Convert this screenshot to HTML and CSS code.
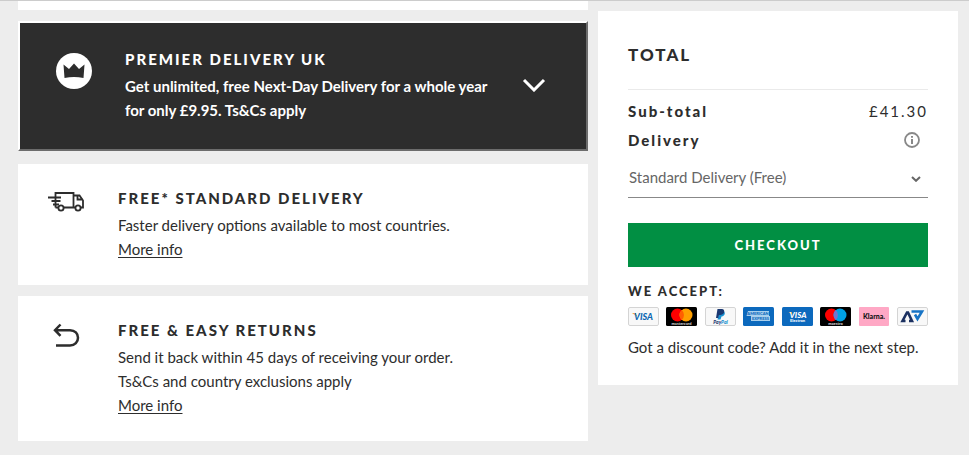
FILE: index.html
```html
<!DOCTYPE html>
<html lang="en">
<head>
    <meta charset="UTF-8">
    <meta name="viewport" content="width=device-width, initial-scale=1.0">
    <title>My Bag</title>
    <link rel="stylesheet" href="styles.css">
</head>
<body>

    <div class="container">
        <main class="bag">
            <div class="bag-end"></div>

            <button type="button" class="premier">
                <svg class="premier-icon" viewBox="0 0 36 36" aria-hidden="true">
                    <circle cx="18" cy="18" r="18" fill="#fff"/>
                    <path d="M7.500 11.500l5.500 4.500L18 10.500l5 5.500 5.500-4.500-1 13.500q-9.500-2-19 0z" fill="#2d2d2d"/>
                </svg>
                <span class="premier-text">
                    <span class="heading">PREMIER DELIVERY UK</span>
                    <span class="copy">Get unlimited, free Next-Day Delivery for a whole year for only £9.95. Ts&amp;Cs apply</span>
                </span>
                <svg class="premier-arrow" viewBox="0 0 24 14" aria-hidden="true">
                    <path d="M2 2l10 10L22 2" fill="none" stroke="#fff" stroke-width="3"/>
                </svg>
            </button>

            <section class="card">
                <svg class="card-icon" viewBox="0 0 36 28" fill="none" stroke="#2d2d2d" stroke-width="1.800" aria-hidden="true">
                    <path d="M7.500 20.500V6h18v14.500H16M26 8.500h5.500l3.500 5v7h-2M29.500 9v3.500H35M7.500 20.500H10M23 20.500h4"/>
                    <path d="M0 10.500h13M3.500 14h9M5 17.500h6"/>
                    <circle cx="13" cy="21" r="2.600"/>
                    <circle cx="30" cy="21" r="2.600"/>
                </svg>
                <div>
                    <h2 class="heading">FREE* STANDARD DELIVERY</h2>
                    <p class="copy">Faster delivery options available to most countries.</p>
                    <a href="#" class="more">More info</a>
                </div>
            </section>

            <section class="card">
                <svg class="card-icon" viewBox="0 0 36 28" fill="none" stroke="#2d2d2d" stroke-width="2.500" aria-hidden="true">
                    <path d="M8 26.500h14c5 0 8-3.500 8-7.700s-3-7.600-8-7.600H7M12.500 5.500L7 11.200l5.500 5.700"/>
                </svg>
                <div>
                    <h2 class="heading">FREE &amp; EASY RETURNS</h2>
                    <p class="copy">Send it back within 45 days of receiving your order.</p>
                    <p class="copy">Ts&amp;Cs and country exclusions apply</p>
                    <a href="#" class="more">More info</a>
                </div>
            </section>
        </main>

        <aside class="total">
            <h2 class="total-title">TOTAL</h2>

            <div class="row">
                <span class="label">Sub-total</span>
                <span class="price">£41.30</span>
            </div>
            <div class="row">
                <label class="label" for="delivery">Delivery</label>
                <button type="button" class="info" aria-label="Delivery information">
                    <svg viewBox="0 0 16 16" width="16" height="16" fill="none" stroke="#888" stroke-width="1.800" aria-hidden="true">
                        <circle cx="8" cy="8" r="7"/>
                        <path d="M8 7v5M8 4v1.800" stroke-width="2"/>
                    </svg>
                </button>
            </div>

            <div class="select-box">
                <select id="delivery" name="delivery">
                    <option>Standard Delivery (Free)</option>
                </select>
                <svg class="select-arrow" viewBox="0 0 10 6" aria-hidden="true">
                    <path d="M1 1l4 3.800L9 1" fill="none" stroke="#666" stroke-width="2"/>
                </svg>
            </div>

            <button type="button" class="checkout">CHECKOUT</button>

            <h3 class="accept">WE ACCEPT:</h3>
            <ul class="payments">
                <li>
                    <svg viewBox="0 0 31 19" role="img" aria-label="Visa">
                        <rect class="plain" x=".5" y=".5" width="30" height="18" rx="1.500"/>
                        <path d="M4 6h3.500l1.500 3.500z" fill="#f7a823"/>
                        <text class="visa" x="15.500" y="12.800" fill="#0b67b2">VISA</text>
                    </svg>
                </li>
                <li>
                    <svg viewBox="0 0 31 19" role="img" aria-label="Mastercard">
                        <rect width="31" height="19" rx="1.500" fill="#000"/>
                        <circle cx="11.500" cy="8" r="6.500" fill="#f00"/>
                        <circle cx="20" cy="8" r="6.500" fill="#ff9f00"/>
                        <path d="M15.750 3.100a6.500 6.500 0 0 1 0 9.800 6.500 6.500 0 0 1 0-9.800z" fill="#ff5f00"/>
                        <text class="tiny" x="15.500" y="17.500" fill="#ccc">mastercard</text>
                    </svg>
                </li>
                <li>
                    <svg viewBox="0 0 31 19" role="img" aria-label="PayPal">
                        <rect class="plain" x=".5" y=".5" width="30" height="18" rx="1.500"/>
                        <path d="M14.500 4h4c2 1 2 5-2 5.500l-1 3h-3z" fill="#1790d0"/>
                        <path d="M12.500 2h4.500c3 0 3.500 5.500-1.500 6h-1.500l-.8 3H11z" fill="#1b3871"/>
                        <text class="paypal" x="15.500" y="16.500" fill="#1b3871">Pay<tspan fill="#1790d0">Pal</tspan></text>
                    </svg>
                </li>
                <li>
                    <svg viewBox="0 0 31 19" role="img" aria-label="American Express">
                        <rect width="31" height="19" rx="1.500" fill="#0c69bd"/>
                        <path d="M5 4h21v5H3.500zM8 9h19v5H8z" fill="#a9d0ed"/>
                        <text class="tiny" x="15" y="8.200" fill="#0c69bd">AMERICAN</text>
                        <text class="tiny" x="17.500" y="13.200" fill="#0c69bd">EXPRESS</text>
                    </svg>
                </li>
                <li>
                    <svg viewBox="0 0 31 19" role="img" aria-label="Visa Electron">
                        <rect width="31" height="19" rx="1.500" fill="#0c69bd"/>
                        <path d="M6.500 5h3l1 2.500z" fill="#f7a823"/>
                        <text class="visa-small" x="16" y="10.500" fill="#fff">VISA</text>
                        <text class="tiny" x="15.500" y="14.800" fill="#fff">Electron</text>
                    </svg>
                </li>
                <li>
                    <svg viewBox="0 0 31 19" role="img" aria-label="Maestro">
                        <rect width="31" height="19" rx="1.500" fill="#000"/>
                        <circle cx="11.500" cy="8" r="6.500" fill="#f00"/>
                        <circle cx="20" cy="8" r="6.500" fill="#00a2e5"/>
                        <path d="M15.750 3.100a6.500 6.500 0 0 1 0 9.800 6.500 6.500 0 0 1 0-9.800z" fill="#7375cf"/>
                        <text class="tiny" x="15.500" y="17.500" fill="#ccc">maestro</text>
                    </svg>
                </li>
                <li>
                    <svg viewBox="0 0 31 19" role="img" aria-label="Klarna">
                        <rect width="30" height="19" rx="1" fill="#ffa8c5"/>
                        <text class="klarna" x="15" y="11.700" fill="#111">Klarna.</text>
                    </svg>
                </li>
                <li>
                    <svg viewBox="0 0 31 19" role="img" aria-label="Afterpay">
                        <rect class="plain" x=".5" y=".5" width="30" height="18" rx="1.500"/>
                        <path d="M8.500 14H5.500L10 5.500h1L15 14h-3" fill="none" stroke="#1b3060" stroke-width="2.600"/>
                        <path d="M14.500 4.500H25L20.500 12 18 7.500" fill="none" stroke="#1673c5" stroke-width="2.600"/>
                    </svg>
                </li>
            </ul>

            <p class="discount">Got a discount code? Add it in the next step.</p>
        </aside>
    </div>

</body>
</html>
```

FILE: styles.css
```css
* {
    box-sizing: border-box;
}

body {
    margin: 0;
    background: #ededed;
    border-top: 1px solid #ccc;
    color: #2d2d2d;
    font-family: Lato, sans-serif;
    font-size: 15px;
    line-height: 24px;
}

h2, h3, p, ul {
    margin: 0;
    padding: 0;
}

button, select {
    font-family: inherit;
    font-size: inherit;
    line-height: inherit;
    cursor: pointer;
}

.container {
    display: grid;
    grid-template-columns: 19fr 12fr;
    align-items: start;
    gap: 10px;
    padding: 0 11px 14px 18px;
}

/* left column */
.bag-end {
    height: 9px;
    background: #fff;
}

.premier {
    display: flex;
    align-items: flex-start;
    width: 100%;
    margin-top: 11px;
    margin-bottom: 13px;
    padding: 24px 40px 27px 36px;
    background: #2d2d2d;
    border: 2px solid;
    border-color: #fff #6c6c6c #6c6c6c #fff;
    color: #fff;
    text-align: left;
}

.premier-icon {
    flex: none;
    width: 36px;
    height: 36px;
    margin-top: 6px;
    margin-right: 33px;
}

.premier-text {
    flex: 1;
}

.premier-arrow {
    flex: none;
    align-self: center;
    width: 24px;
    height: 14px;
    margin-left: 24px;
}

.heading {
    display: block;
    margin-bottom: 3px;
    font-size: 15px;
    font-weight: 900;
    line-height: 24px;
    letter-spacing: 2px;
}

.copy {
    display: block;
}

.premier .copy {
    font-weight: 700;
}

.card {
    display: flex;
    align-items: flex-start;
    margin-bottom: 11px;
    padding: 22px 30px 24px;
    background: #fff;
}

.card:last-child {
    margin-bottom: 0;
}

.card-icon {
    flex: none;
    width: 36px;
    height: 28px;
    margin-top: 1px;
    margin-right: 34px;
}

.more {
    display: block;
    width: max-content;
    color: inherit;
    text-underline-offset: 2px;
}

/* right column */
.total {
    margin-top: 10px;
    padding: 32px 30px 26px;
    background: #fff;
}

.total-title {
    margin-bottom: 9px;
    padding-bottom: 22px;
    border-bottom: 1px solid #eaeaea;
    font-size: 17px;
    font-weight: 900;
    letter-spacing: 2px;
}

.row {
    display: flex;
    align-items: center;
    justify-content: space-between;
    margin-bottom: 5px;
}

.label {
    font-weight: 900;
    letter-spacing: 2px;
}

.price {
    letter-spacing: 2px;
}

.info {
    display: flex;
    margin-right: 8px;
    padding: 0;
    background: none;
    border: none;
}

.select-box {
    position: relative;
    margin-bottom: 25px;
}

.select-box select {
    appearance: none;
    display: block;
    width: 100%;
    height: 41px;
    padding: 0 24px 0 1px;
    background: #fff;
    border: none;
    border-bottom: 1px solid #888;
    border-radius: 0;
    color: #666;
}

.select-arrow {
    position: absolute;
    top: 19px;
    right: 7px;
    width: 10px;
    height: 6px;
    pointer-events: none;
}

.checkout {
    display: block;
    width: 100%;
    height: 44px;
    margin-bottom: 12px;
    background: #018f43;
    border: none;
    color: #fff;
    font-size: 13px;
    font-weight: 900;
    letter-spacing: 2px;
}

.accept {
    margin-bottom: 4px;
    font-size: 13px;
    font-weight: 900;
    letter-spacing: 2px;
}

.payments {
    display: flex;
    justify-content: space-between;
    margin-bottom: 9px;
    list-style: none;
}

.payments svg {
    display: block;
    width: 31px;
    height: 19px;
}

.payments text {
    text-anchor: middle;
    font-weight: 900;
}

.plain {
    fill: #f8f8f8;
    stroke: #d4d4d4;
}

.visa {
    font-size: 9px;
    font-style: italic;
}

.visa-small {
    font-size: 8px;
    font-style: italic;
}

.paypal {
    font-size: 5px;
    font-style: italic;
}

.klarna {
    font-size: 7px;
}

.tiny {
    font-size: 4px;
}
```
